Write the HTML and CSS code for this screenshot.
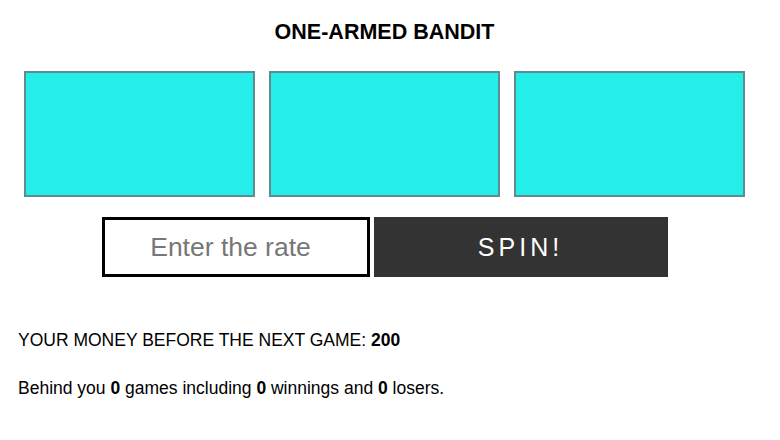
FILE: index.html
```html
<!DOCTYPE html>
<html lang="en">
<head>
<meta charset="utf-8">
<title>One-armed bandit</title>
<link rel="stylesheet" href="styles.css">
</head>
<body>
<main class="game">
  <h1 class="title">ONE-ARMED BANDIT</h1>
  <div class="reels">
    <div class="reel"></div>
    <div class="reel"></div>
    <div class="reel"></div>
  </div>
  <div class="controls">
    <input class="rate" type="text" placeholder="Enter the rate">
    <button class="spin" type="button">SPIN!</button>
  </div>
</main>
<section class="stats">
  <p class="money">YOUR MONEY BEFORE THE NEXT GAME: <b>200</b></p>
  <p class="summary">Behind you <b>0</b> games including <b>0</b> winnings and <b>0</b> losers.</p>
</section>
</body>
</html>
```
FILE: styles.css
```css
* { box-sizing: border-box; }
html, body { margin: 0; padding: 0; background: #fff; }
body {
  font-family: "Liberation Sans", Arial, sans-serif;
  color: #000;
}
.game {
  width: 721px;
  margin-left: 24px;
  padding-top: 19px;
}
.title {
  margin: 0;
  font-size: 21.5px;
  line-height: 26px;
  font-weight: bold;
  text-align: center;
}
.reels {
  display: flex;
  gap: 14px;
  margin-top: 26px;
}
.reel {
  width: 231px;
  height: 126px;
  background: #25eeea;
  border: 2px solid #5f8c90;
}
.controls {
  display: flex;
  justify-content: center;
  gap: 4px;
  margin-top: 20px;
}
.rate {
  width: 268px;
  height: 60px;
  border: 3px solid #000;
  background: #fff;
  font-family: "Liberation Sans", Arial, sans-serif;
  font-size: 26.5px;
  text-align: center;
  color: #333;
  padding: 0 10px 0 0;
  outline: none;
}
.rate::placeholder { color: #777; opacity: 1; }
.spin {
  width: 294px;
  height: 60px;
  border: none;
  background: #333;
  color: #fff;
  font-family: "Liberation Sans", Arial, sans-serif;
  font-size: 25px;
  letter-spacing: 4px;
  padding: 0;
}
.stats {
  padding-left: 18px;
  padding-top: 53px;
}
.stats p {
  margin: 0;
  font-size: 17.5px;
  line-height: 20px;
}
.stats .summary { margin-top: 28px; }
```
